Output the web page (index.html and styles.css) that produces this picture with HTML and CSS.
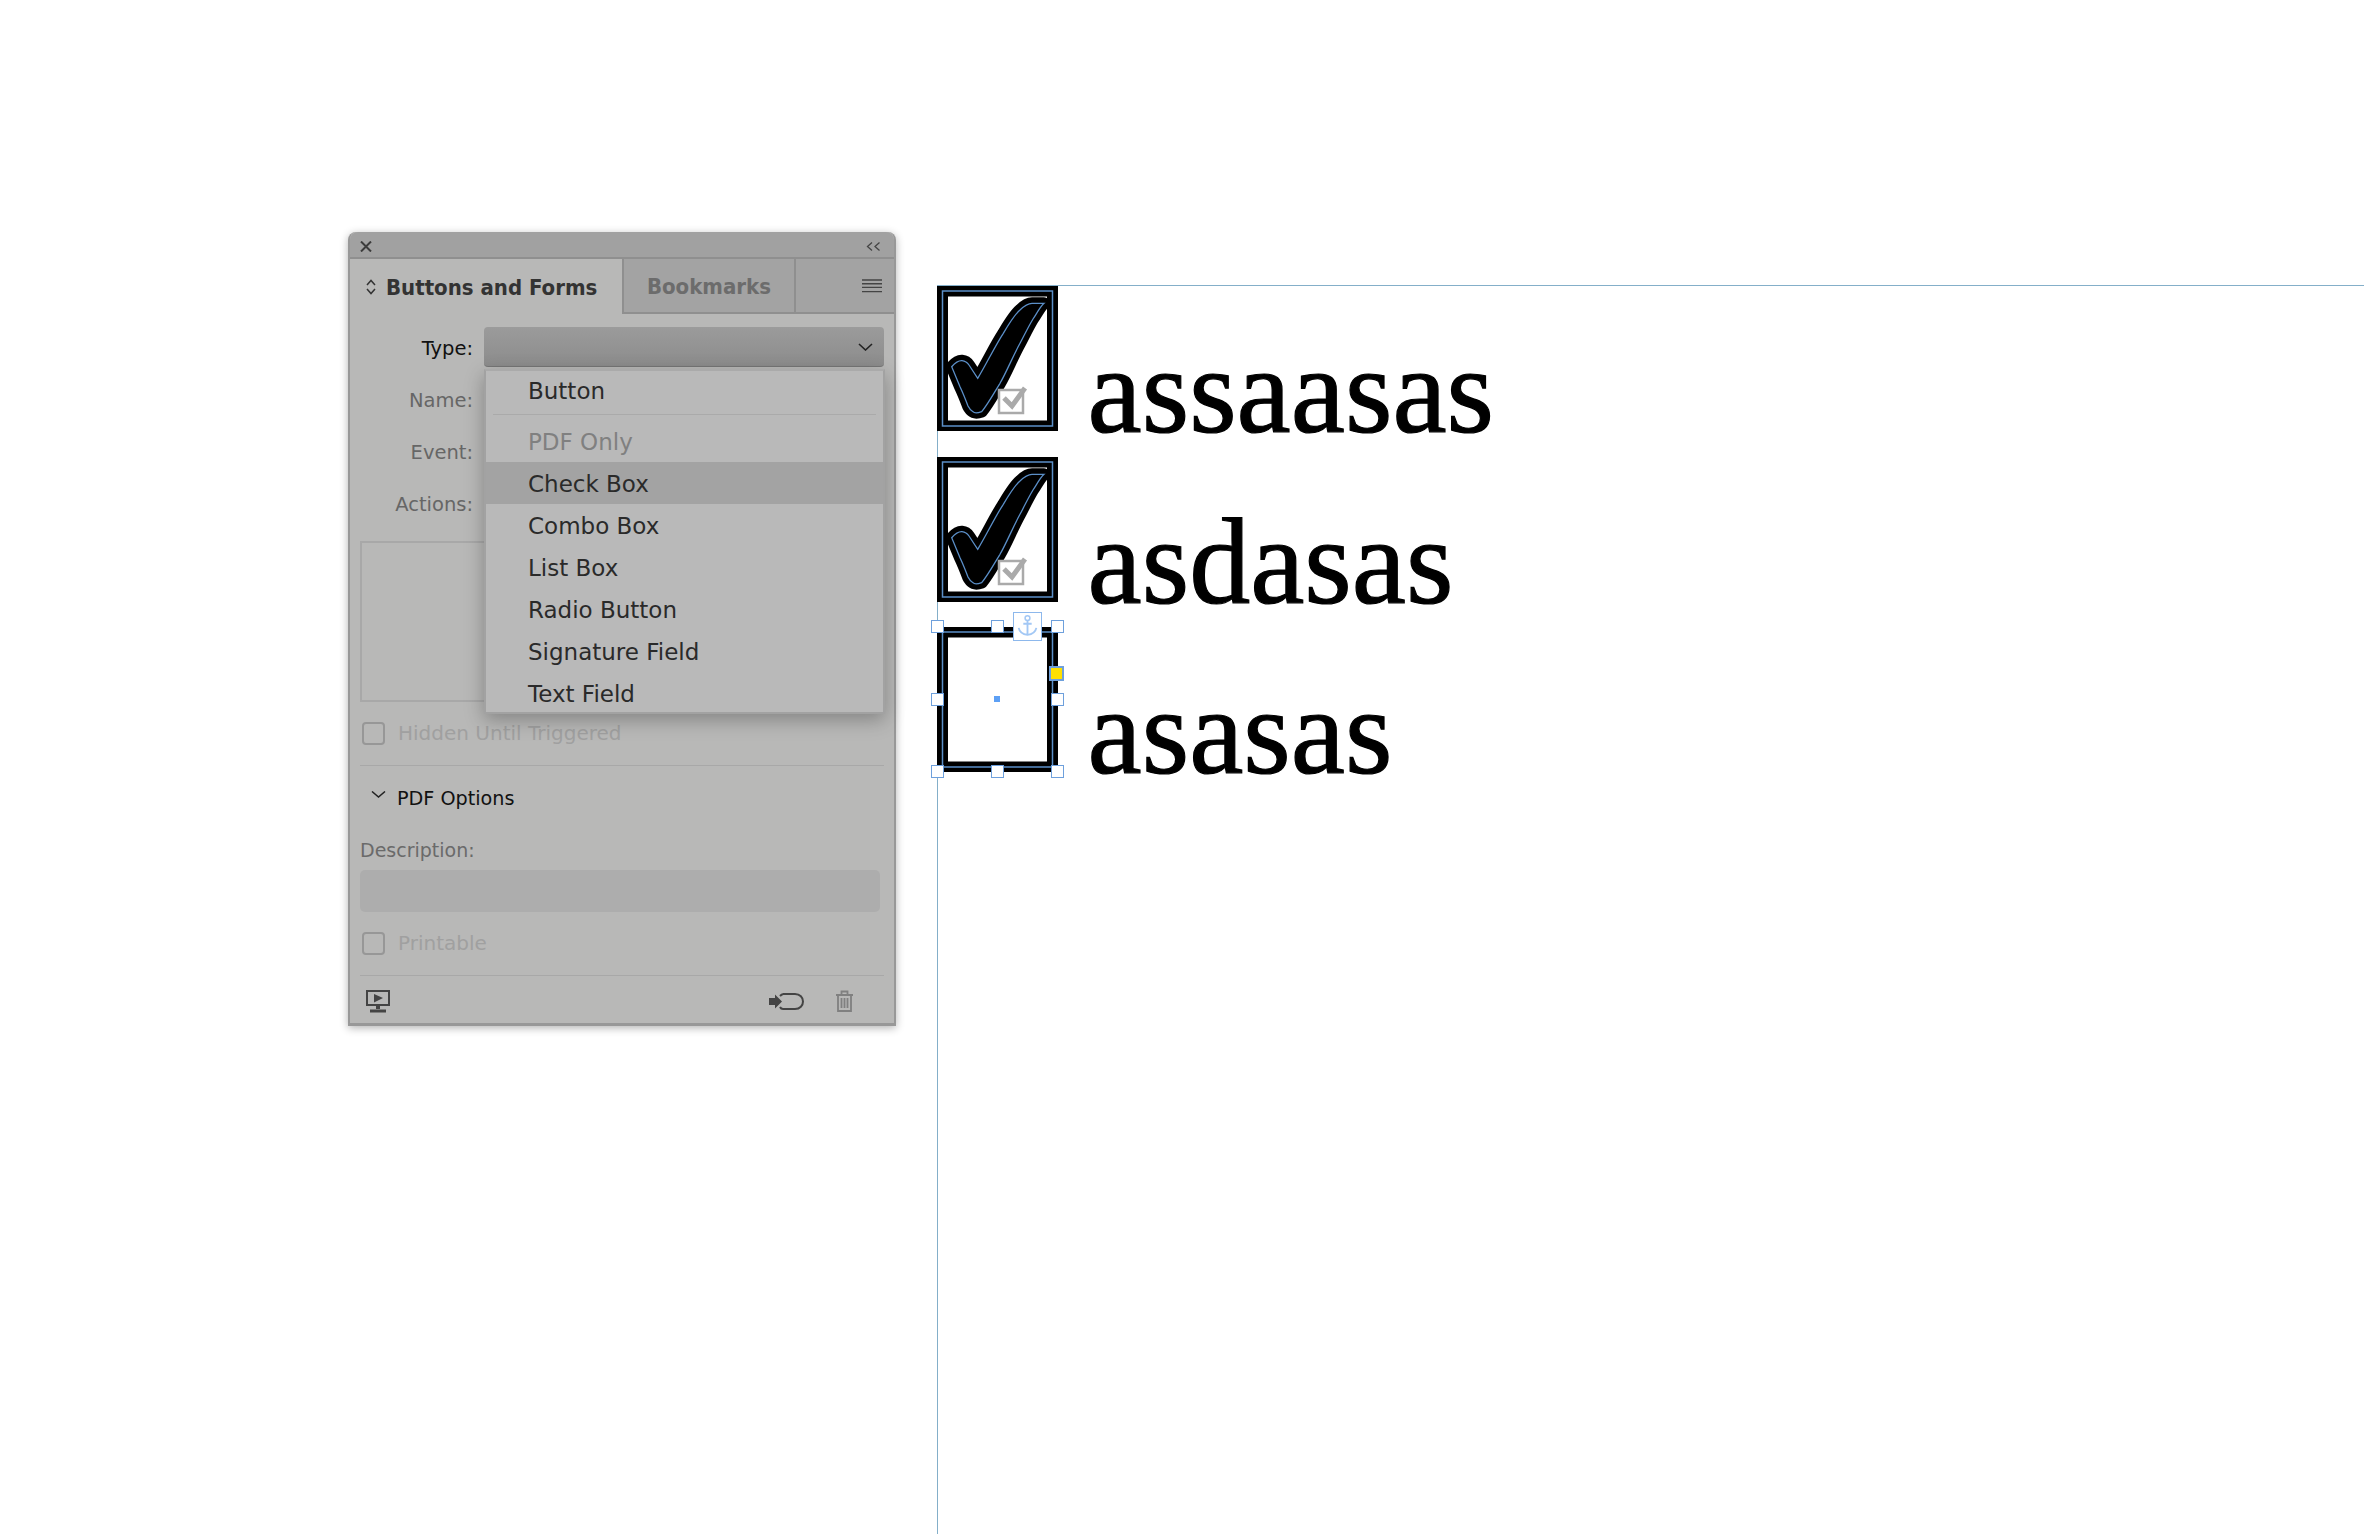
FILE: index.html
```html
<!DOCTYPE html>
<html lang="en">
<head>
    <meta charset="UTF-8">
    <title>Buttons and Forms</title>
    <link rel="stylesheet" href="styles.css">
</head>
<body>

    <svg class="defs" width="0" height="0">
        <symbol id="frame" viewBox="0 0 121 145">
            <rect x="5.5" y="5" width="110" height="135" fill="#fff" stroke="#000" stroke-width="11"/>
            <rect x="5.5" y="5" width="110" height="135" fill="none" stroke="#5b8fc8" stroke-width="1.5"/>
        </symbol>
        <symbol id="checked" viewBox="0 0 121 145">
            <use href="#frame"/>
            <path d="M14.7 80.7C18 77 22 74.5 25 74.7C28 75 30 76 32 79L40.7 92.3C50 77 58 60 66.3 47.3C73 36 78 28 83 24C87 20 91 17.3 95 17.3L107 17.3C103 21 100 27 96 33C90 43 86 52 83 57.3C75 72 70 85 63 97.3C57 107 51 118 44.7 125.7C41 127 37 127 36 125.7C33 124 32 122 31 120C28 112 26 107 23 100.7Z" fill="#000" stroke="#000" stroke-width="12" stroke-linejoin="round"/>
            <path d="M14.7 80.7C18 77 22 74.5 25 74.7C28 75 30 76 32 79L40.7 92.3C50 77 58 60 66.3 47.3C73 36 78 28 83 24C87 20 91 17.3 95 17.3L107 17.3C103 21 100 27 96 33C90 43 86 52 83 57.3C75 72 70 85 63 97.3C57 107 51 118 44.7 125.7C41 127 37 127 36 125.7C33 124 32 122 31 120C28 112 26 107 23 100.7Z" fill="none" stroke="#5b8fc8" stroke-width="1.3"/>
            <rect x="62" y="104" width="24" height="23" fill="#fff" stroke="#aaa" stroke-width="2.5"/>
            <path d="M67 112L75 120L88 102" fill="none" stroke="#aaa" stroke-width="5"/>
        </symbol>
    </svg>

    <!-- Layout page -->
    <div class="guide guide-top"></div>
    <div class="guide guide-left"></div>

    <div class="spread">
        <div class="line">
            <svg class="frame"><use href="#checked"/></svg>
            <span class="word">assaasas</span>
        </div>
        <div class="line">
            <svg class="frame"><use href="#checked"/></svg>
            <span class="word">asdasas</span>
        </div>
        <div class="line">
            <div class="selected">
                <svg class="frame"><use href="#frame"/></svg>
                <i class="handle h-tl"></i>
                <i class="handle h-tm"></i>
                <i class="handle h-tr"></i>
                <i class="handle h-ml"></i>
                <i class="handle h-mr"></i>
                <i class="handle h-bl"></i>
                <i class="handle h-bm"></i>
                <i class="handle h-br"></i>
                <i class="port"></i>
                <i class="center-dot"></i>
                <svg class="anchor" viewBox="0 0 29 29">
                    <circle cx="14.5" cy="5.5" r="2.6" fill="none" stroke="#a3c8f5" stroke-width="1.6"/>
                    <path d="M14.5 8V23M10 11.5H19M5 16C6 21 10 23 14.5 23.5C19 23 23 21 24 16" fill="none" stroke="#a3c8f5" stroke-width="2"/>
                </svg>
            </div>
            <span class="word">asasas</span>
        </div>
    </div>

    <!-- Panel -->
    <div class="panel">
        <div class="titlebar">
            <svg class="icon" width="12" height="11" viewBox="0 0 12 11"><path d="M1 0.5L11 10.5M11 0.5L1 10.5" stroke="#3c3c3c" stroke-width="2" fill="none"/></svg>
            <svg class="icon" width="15" height="9" viewBox="0 0 15 9"><path d="M6 0.5L1.5 4.5L6 8.5M13.5 0.5L9 4.5L13.5 8.5" stroke="#444" stroke-width="1.3" fill="none"/></svg>
        </div>

        <div class="tabs">
            <div class="tab tab-active">
                <svg width="10" height="16" viewBox="0 0 10 16"><path d="M1 6L5 1.5L9 6M1 10L5 14.5L9 10" stroke="#333" stroke-width="1.5" fill="none"/></svg>
                <span>Buttons and Forms</span>
            </div>
            <div class="tab tab-other">Bookmarks</div>
            <div class="tab-rest">
                <svg width="20" height="14" viewBox="0 0 20 14"><path d="M0 1H20M0 4.7H20M0 8.4H20M0 12.6H20" stroke="#444" stroke-width="1.4" fill="none"/></svg>
            </div>
        </div>

        <div class="body">
            <div class="row">
                <label class="label label-on">Type:</label>
                <div class="select">
                    <svg width="15" height="8" viewBox="0 0 15 8"><path d="M1 1L7.5 7L14 1" stroke="#222" stroke-width="1.6" fill="none"/></svg>
                </div>
            </div>
            <div class="row"><label class="label">Name:</label><div class="field"></div></div>
            <div class="row"><label class="label">Event:</label><div class="field"></div></div>
            <div class="row"><label class="label">Actions:</label><div class="field"></div></div>

            <div class="action-list"></div>

            <div class="check check-hidden"><i class="box"></i><span>Hidden Until Triggered</span></div>
            <div class="rule"></div>

            <div class="section-head">
                <svg width="15" height="7" viewBox="0 0 15 7"><path d="M1 0.5L7.5 6L14 0.5" stroke="#222" stroke-width="1.5" fill="none"/></svg>
                <span>PDF Options</span>
            </div>
            <div class="desc-label">Description:</div>
            <div class="desc-input"></div>
            <div class="check check-print"><i class="box"></i><span>Printable</span></div>
            <div class="rule rule-foot"></div>
        </div>

        <div class="foot">
            <svg width="24" height="23" viewBox="0 0 24 23"><path d="M1 1H23V15H1Z" fill="none" stroke="#444" stroke-width="2"/><path d="M8 4L17 8L8 12.5Z" fill="#444"/><path d="M10 16H14V19H10ZM4 19.5H20V22.5H4Z" fill="#444"/></svg>
            <div class="foot-right">
                <svg width="36" height="19" viewBox="0 0 36 19"><path d="M14 2H26C31 2 34 5.5 34 9.5C34 13.5 31 17 26 17H14C12.5 17 11.5 16 11 15" fill="none" stroke="#444" stroke-width="2"/><path d="M11 4C12 3 13 2.4 14 2" fill="none" stroke="#444" stroke-width="2"/><path d="M0 6H6V2.5L13 9.5L6 16.5V13H0Z" fill="#444"/></svg>
                <svg width="19" height="22" viewBox="0 0 19 22"><path d="M1 5H18M3 5V21H16V5M6.5 5V1.5H12.5V5M6.5 8V18M9.5 8V18M12.5 8V18" fill="none" stroke="#808080" stroke-width="1.8"/></svg>
            </div>
        </div>

        <!-- open Type menu -->
        <div class="menu">
            <div class="item item-first">Button</div>
            <div class="menu-sep"></div>
            <div class="item item-off">PDF Only</div>
            <div class="item item-hover">Check Box</div>
            <div class="item">Combo Box</div>
            <div class="item">List Box</div>
            <div class="item">Radio Button</div>
            <div class="item">Signature Field</div>
            <div class="item">Text Field</div>
        </div>
    </div>

</body>
</html>
```

FILE: styles.css
```css
html, body { margin: 0; height: 100%; background: #fff; overflow: hidden; }
body { position: relative; font-family: "DejaVu Sans", sans-serif; }
.defs { position: absolute; }

/* Layout page */
.guide { position: absolute; background: #84afc9; }
.guide-top { left: 937px; right: 0; top: 285px; height: 1px; }
.guide-left { left: 937px; top: 285px; bottom: 0; width: 1px; }

.spread { position: absolute; left: 937px; top: 286px; display: flex; flex-direction: column; gap: 25.5px; }
.line { display: flex; align-items: flex-end; gap: 29.5px; height: 145px; }
.frame { display: block; width: 121px; height: 145px; }
.word { font-family: "Liberation Serif", serif; font-size: 122px; line-height: 80px; color: #000; -webkit-text-stroke: 1.2px #000; }

.selected { position: relative; width: 121px; height: 145px; }
.handle { position: absolute; width: 13px; height: 13px; box-sizing: border-box; background: #fff; border: 1px solid #6ea0dc; }
.h-tl, .h-tm, .h-tr { top: -7px; }
.h-ml, .h-mr { top: 66px; }
.h-bl, .h-bm, .h-br { top: 138px; }
.h-tl, .h-ml, .h-bl { left: -6px; }
.h-tm, .h-bm { left: 54px; }
.h-tr, .h-mr, .h-br { left: 114px; }
.port { position: absolute; left: 112px; top: 39px; width: 15px; height: 15px; box-sizing: border-box; background: #ffe000; border: 2px solid #6ea0dc; }
.center-dot { position: absolute; left: 57px; top: 69px; width: 6px; height: 6px; background: #5da0f5; }
.anchor { position: absolute; left: 76px; top: -15px; width: 29px; height: 29px; box-sizing: border-box; background: #fff; border: 1px solid #8db8ec; }

/* Panel */
.panel { position: absolute; left: 348px; top: 232px; width: 548px; height: 794px; box-sizing: border-box; display: flex; flex-direction: column; background: #b8b8b7; border: solid #989898; border-width: 0 2px 3px; border-radius: 8px 8px 0 0; box-shadow: 0 2px 8px rgba(0, 0, 0, 0.3); }
.titlebar { height: 27px; flex: none; box-sizing: border-box; display: flex; justify-content: space-between; align-items: center; padding: 4px 13px 0 10px; background: #a1a1a1; border-bottom: 2px solid #8f8f8f; border-radius: 8px 8px 0 0; }
.tabs { height: 55px; flex: none; display: flex; }
.tab { display: flex; align-items: center; box-sizing: border-box; font-stretch: condensed; font-weight: bold; font-size: 22px; }
.tab span, .tab-other { padding-top: 2px; }
.tab-active { width: 274px; gap: 10px; padding-left: 16px; color: #333; border-right: 2px solid #8f8f8f; }
.tab-other { width: 172px; justify-content: center; color: #6c6c6c; background: #a3a3a3; border-right: 2px solid #8f8f8f; border-bottom: 2px solid #8f8f8f; }
.tab-rest { flex: 1; display: flex; align-items: center; justify-content: flex-end; padding-right: 12px; background: #a3a3a3; border-bottom: 2px solid #8f8f8f; }

.body { flex: none; padding: 13px 10px 0; }
.row { display: flex; align-items: center; gap: 11px; height: 40px; margin-bottom: 12px; }
.label { width: 113px; padding-top: 2px; text-align: right; font-size: 19.5px; color: #666; }
.label-on { color: #111; }
.field { flex: 1; height: 40px; background: #adadad; }
.select { flex: 1; height: 40px; box-sizing: border-box; display: flex; align-items: center; justify-content: flex-end; padding-right: 11px; background: linear-gradient(#9b9b9b, #8c8c8c); border-radius: 4px; border-bottom: 1px solid #777; }

.action-list { height: 161px; margin-top: 18px; box-sizing: border-box; border: 2px solid #a8a8a8; }

.check { display: flex; align-items: center; gap: 13px; font-size: 20px; color: #a0a0a0; margin-left: 2px; }
.box { width: 23px; height: 23px; box-sizing: border-box; border: 2px solid #979797; border-radius: 4px; }
.check-hidden { margin-top: 19px; }
.rule { height: 1px; background: #a8a8a8; margin-top: 20px; }

.section-head { display: flex; align-items: center; gap: 11px; margin: 20px 0 0 11px; font-size: 19.2px; color: #111; height: 24px; }
.section-head svg { margin-top: -8px; }
.desc-label { margin-top: 28px; height: 24px; line-height: 24px; font-size: 19px; color: #6a6a6a; }
.desc-input { height: 42px; width: 520px; margin-top: 8px; background: #adadad; border-radius: 5px; }
.check-print { margin-top: 19px; }
.rule-foot { margin-top: 20px; }

.foot { flex: 1; display: flex; justify-content: space-between; align-items: flex-start; padding: 14px 40px 0 16px; }
.foot-right { display: flex; align-items: center; gap: 30px; }

/* Type menu */
.menu { position: absolute; left: 134px; top: 137px; width: 401px; height: 345px; box-sizing: border-box; background: #b9b9b9; border: 2px solid #a2a2a2; border-top-color: #aaa; box-shadow: 0 6px 18px rgba(0, 0, 0, 0.28); }
.item { height: 42px; line-height: 45px; padding-left: 42px; font-size: 23px; color: #2a2a2a; }
.item-first { height: 43px; line-height: 40px; }
.menu-sep { height: 1px; margin: 0 7px 5px; background: #aaa; }
.item-off { color: #808080; }
.item-hover { background: #a3a3a3; }
```
